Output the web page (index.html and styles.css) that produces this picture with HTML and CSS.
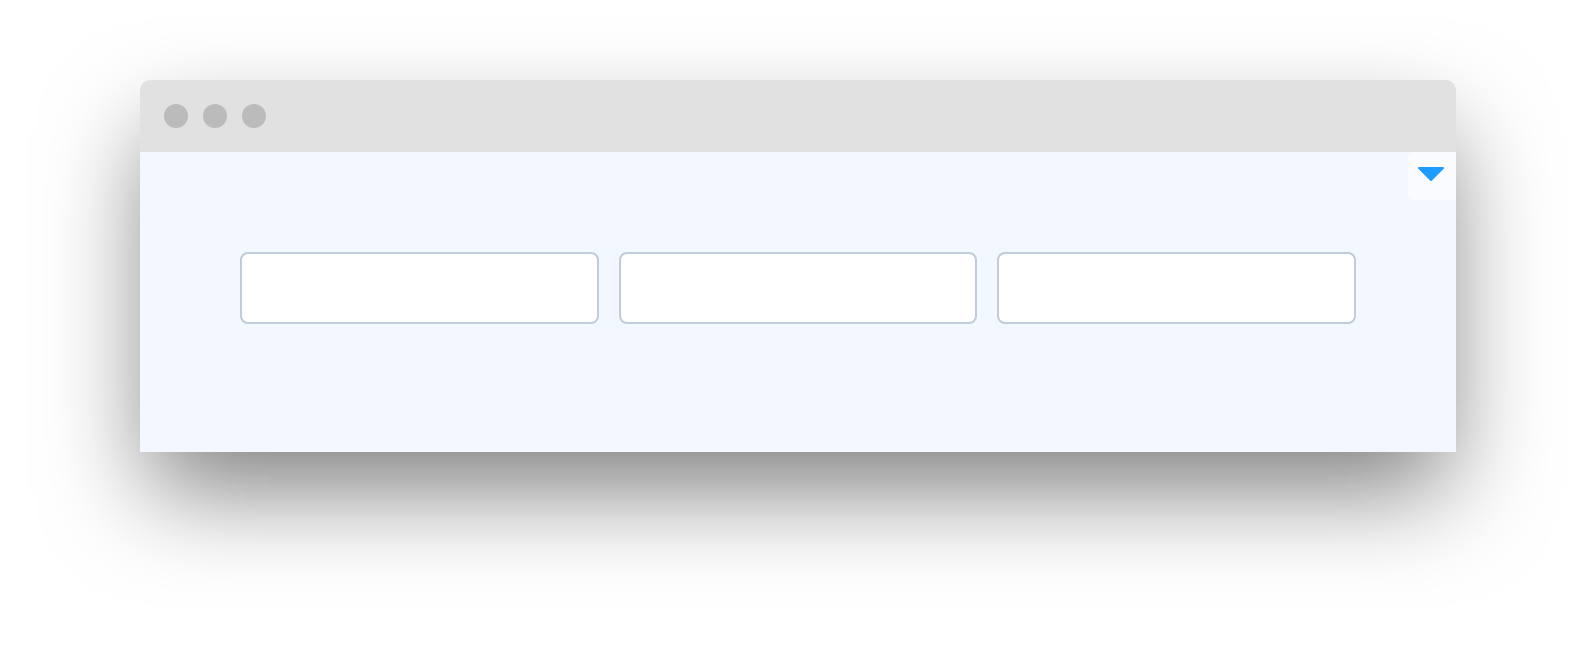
FILE: index.html
```html
<!DOCTYPE html>
<html>
<head>
<meta charset="utf-8">
<link rel="stylesheet" href="styles.css">
</head>
<body>
<div class="page">
  <div class="window">
    <div class="titlebar">
      <span class="dot"></span>
      <span class="dot"></span>
      <span class="dot"></span>
    </div>
    <div class="content">
      <div class="boxes">
        <div class="box"></div>
        <div class="box"></div>
        <div class="box"></div>
      </div>
      <div class="dropdown">
        <svg width="28" height="16" viewBox="0 0 28 16">
          <polygon points="2,2 26,2 14,14" fill="#1e9bff" stroke="#1e9bff" stroke-width="2" stroke-linejoin="round"/>
        </svg>
      </div>
    </div>
  </div>
</div>
</body>
</html>
```
FILE: styles.css
```css
html, body {
  margin: 0;
  padding: 0;
  background: #ffffff;
  font-family: "Liberation Sans", Arial, sans-serif;
}
.page {
  width: 1596px;
  height: 652px;
  padding: 80px 0 0 140px;
  box-sizing: border-box;
  overflow: hidden;
}
.window {
  width: 1316px;
  border-radius: 10px 10px 0 0;
  box-shadow: 0 46px 100px -8px rgba(0, 0, 0, 0.5);
  overflow: hidden;
}
.titlebar {
  height: 72px;
  background: #e1e1e1;
  display: flex;
  align-items: center;
  padding-left: 24px;
  gap: 15px;
}
.dot {
  width: 24px;
  height: 24px;
  border-radius: 50%;
  background: #bbbbbb;
}
.content {
  position: relative;
  height: 300px;
  background: #f3f7ff;
  padding: 100px;
  box-sizing: border-box;
}
.boxes {
  display: grid;
  grid-template-columns: repeat(3, 1fr);
  gap: 20px;
}
.box {
  height: 72px;
  background: #ffffff;
  border: 2px solid #c0ccd9;
  border-radius: 8px;
  box-sizing: border-box;
}
.dropdown {
  position: absolute;
  top: 0;
  right: 0;
  width: 48px;
  height: 48px;
  background: #f9fbff;
  border-radius: 6px 0 0 8px;
  display: flex;
  justify-content: center;
  padding-top: 14px;
  padding-right: 2px;
  box-sizing: border-box;
}
.dropdown svg {
  display: block;
}
```
